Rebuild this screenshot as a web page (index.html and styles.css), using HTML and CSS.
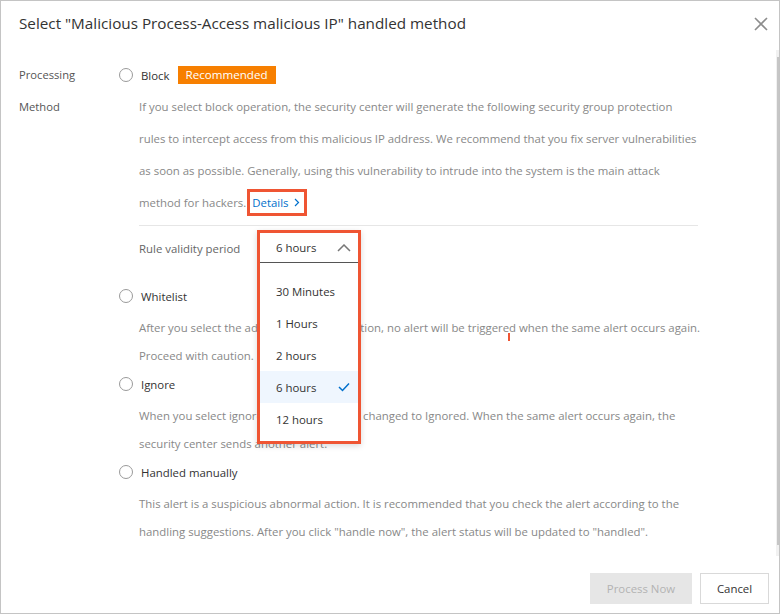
FILE: index.html
```html
<!DOCTYPE html>
<html lang="en">
<head>
<meta charset="utf-8">
<title>Handled method</title>
<link rel="stylesheet" href="styles.css">
</head>
<body>
<div class="dialog">
  <div class="dlg-header">
    <h1 class="dlg-title">Select "Malicious Process-Access malicious IP" handled method</h1>
    <button class="dlg-close" aria-label="Close">
      <svg width="14" height="14" viewBox="0 0 14 14"><path d="M1 1 L13 13 M13 1 L1 13" stroke="#8c8c8c" stroke-width="1.6" fill="none"/></svg>
    </button>
  </div>
  <div class="dlg-body">
    <div class="form-row">
      <div class="form-label">Processing<br>Method</div>
      <div class="form-control">
        <div class="option option-first">
          <span class="radio"></span><span class="opt-label">Block</span><span class="badge">Recommended</span>
        </div>
        <div class="desc desc-block">If you select block operation, the security center will generate the following security group protection<br>rules to intercept access from this malicious IP address. We recommend that you fix server vulnerabilities<br>as soon as possible. Generally, using this vulnerability to intrude into the system is the main attack<br>method for hackers. <span class="annot-link"><a class="link" href="#">Details<svg class="chev" width="6" height="9" viewBox="0 0 6 9"><path d="M1 1 L4.5 4.5 L1 8" stroke="#0070cc" stroke-width="1.2" fill="none"/></svg></a></span></div>
        <div class="divider"></div>
        <div class="rule-row">
          <span class="rule-label">Rule validity period</span>
          <div class="select-anchor">
            <div class="annot-select">
              <div class="select-head">
                <span>6 hours</span>
                <svg width="14" height="8" viewBox="0 0 14 8"><path d="M1 7 L7 1 L13 7" stroke="#777" stroke-width="1.5" fill="none"/></svg>
              </div>
              <ul class="menu">
                <li class="menu-item">30 Minutes</li>
                <li class="menu-item">1 Hours</li>
                <li class="menu-item">2 hours</li>
                <li class="menu-item is-selected">6 hours<svg width="12" height="10" viewBox="0 0 12 10"><path d="M1 5 L4.5 8.5 L11 1.5" stroke="#0070cc" stroke-width="1.5" fill="none"/></svg></li>
                <li class="menu-item">12 hours</li>
              </ul>
            </div>
          </div>
        </div>
        <div class="option option-gap">
          <span class="radio"></span><span class="opt-label">Whitelist</span>
        </div>
        <div class="desc">After you select the add to whitelist operation, no alert will be triggered when the same alert occurs again.<br>Proceed with caution.</div>
        <div class="option">
          <span class="radio"></span><span class="opt-label">Ignore</span>
        </div>
        <div class="desc">When you select ignore, the alert status is changed to Ignored. When the same alert occurs again, the<br>security center sends another alert.</div>
        <div class="option">
          <span class="radio"></span><span class="opt-label">Handled manually</span>
        </div>
        <div class="desc">This alert is a suspicious abnormal action. It is recommended that you check the alert according to the<br>handling suggestions. After you click "handle now", the alert status will be updated to "handled".</div>
      </div>
    </div>
    <span class="cursor-mark"></span>
    <div class="scrollbar"><div class="thumb"></div></div>
  </div>
  <div class="dlg-footer">
    <button class="btn btn-disabled">Process Now</button>
    <button class="btn btn-normal">Cancel</button>
  </div>
</div>
</body>
</html>
```

FILE: styles.css
```css
* { box-sizing: border-box; }
html, body { margin: 0; padding: 0; background: #fff; }
body { font-family: "Open Sans", "Noto Sans", sans-serif; color: #333; }

.dialog {
  width: 780px;
  height: 614px;
  border: 1px solid #c4c4c4;
  background: #fff;
  display: flex;
  flex-direction: column;
}

.dlg-header {
  height: 42px;
  display: flex;
  align-items: center;
  justify-content: space-between;
  padding: 0 11px 0 18px;
}
.dlg-title {
  margin: 0;
  font-size: 15.25px;
  font-weight: 400;
  color: #333;
  line-height: 22px;
  padding-top: 1px;
}
.dlg-close {
  border: 0;
  background: none;
  padding: 0;
  width: 14px;
  height: 14px;
  display: flex;
  margin-top: 4px;
}

.dlg-body {
  position: relative;
  height: 513px;
  padding: 17px 0 0 18px;
  overflow: hidden;
}
.form-row { display: flex; }
.form-label {
  width: 100px;
  flex: none;
  font-size: 11.2px;
  line-height: 32px;
  color: #555;
  margin-top: -1px;
}
.form-control { width: 580px; }

.option {
  display: flex;
  align-items: center;
  height: 28px;
  margin-top: 0;
  font-size: 11.4px;
}
.option-first { margin-top: 1px; }
.option-gap { margin-top: 19px; }
.radio {
  width: 14px;
  height: 14px;
  border: 1px solid #9a9a9a;
  border-radius: 50%;
  flex: none;
}
.opt-label { margin-left: 8px; color: #333; }
.badge {
  margin-left: 8px;
  background: #f77f00;
  color: #fff;
  height: 18px;
  line-height: 18px;
  padding: 0 8px;
  font-size: 11.6px;
}

.desc {
  margin-top: 4px;
  padding-left: 20px;
  font-size: 11.4px;
  line-height: 28px;
  color: #888;
  white-space: nowrap;
}
.desc-block { margin-top: 2px; line-height: 32px; }

.annot-link {
  display: inline-block;
  border: 3px solid #ef5533;
  line-height: 21px;
  padding: 0 4px 0 2px;
  margin-left: -2px;
  vertical-align: middle;
  position: relative;
  top: -1px;
}
.link {
  color: #0070cc;
  text-decoration: none;
  display: inline-flex;
  align-items: center;
}
.chev { margin-left: 5px; }

.divider {
  margin: 6px 0 0 20px;
  width: 559px;
  height: 1px;
  background: #e6e6e6;
}

.rule-row {
  display: flex;
  align-items: center;
  height: 30px;
  margin-top: 7px;
  padding-left: 20px;
  font-size: 11.4px;
}
.rule-label { width: 118px; color: #666; }
.select-anchor { position: relative; width: 104px; height: 30px; }
.annot-select {
  position: absolute;
  left: 0;
  top: -3px;
  width: 104px;
  border: 3px solid #ef5533;
  background: #fff;
  box-shadow: 0 2px 6px rgba(0, 0, 0, 0.15);
  z-index: 2;
}
.select-head {
  height: 30px;
  display: flex;
  align-items: center;
  justify-content: space-between;
  padding: 0 7px 0 16px;
  border-bottom: 1px solid #555;
  color: #333;
}
.menu {
  list-style: none;
  margin: 0;
  padding: 12px 0 6px;
}
.menu-item {
  height: 32px;
  display: flex;
  align-items: center;
  justify-content: space-between;
  padding: 0 8px 0 16px;
  color: #333;
}
.menu-item.is-selected { background: #eff6fe; }

.cursor-mark {
  position: absolute;
  left: 507px;
  top: 290px;
  width: 2px;
  height: 8px;
  background: #ef5533;
}

.scrollbar {
  position: absolute;
  right: 0;
  top: 7px;
  width: 3px;
  height: 506px;
  background: #f1f1f1;
}
.thumb {
  margin-top: 7px;
  margin-left: 1px;
  width: 2px;
  height: 488px;
  background: #c6c6c6;
}

.dlg-footer {
  display: flex;
  justify-content: flex-end;
  gap: 8px;
  padding: 17px 10px 0 0;
}
.btn {
  height: 31px;
  font-family: "Open Sans", "Noto Sans", sans-serif;
  font-size: 11.4px;
  padding: 0;
}
.btn-disabled {
  width: 102px;
  border: 1px solid #e6e6e6;
  background: #e6e6e6;
  color: #b3b3b3;
}
.btn-normal {
  width: 69px;
  border: 1px solid #d9d9d9;
  background: #fff;
  color: #333;
}
```
